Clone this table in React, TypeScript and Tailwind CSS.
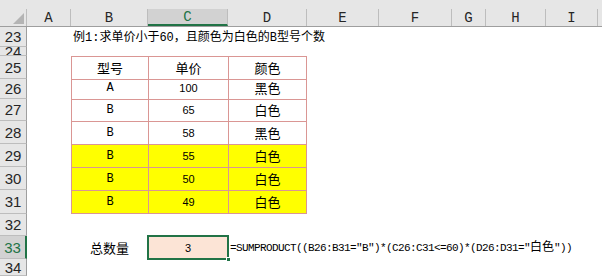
import React from "react";

type Row = {
  n: number;
  h: string;
  kind?: "title" | "head" | "data" | "total";
  cells?: [string, string, string];
  yellow?: boolean;
  last?: boolean;
};

const ROWS: Row[] = [
  { n: 23, h: "h-[20px]", kind: "title" },
  { n: 24, h: "h-[9px]" },
  { n: 25, h: "h-[23px]", kind: "head", cells: ["型号", "单价", "颜色"] },
  { n: 26, h: "h-[20px]", kind: "data", cells: ["A", "100", "黑色"] },
  { n: 27, h: "h-[22px]", kind: "data", cells: ["B", "65", "白色"] },
  { n: 28, h: "h-[23px]", kind: "data", cells: ["B", "58", "黑色"] },
  { n: 29, h: "h-[23px]", kind: "data", cells: ["B", "55", "白色"], yellow: true },
  { n: 30, h: "h-[23px]", kind: "data", cells: ["B", "50", "白色"], yellow: true },
  { n: 31, h: "h-[24px]", kind: "data", cells: ["B", "49", "白色"], yellow: true, last: true },
  { n: 32, h: "h-[22px]" },
  { n: 33, h: "h-[23px]", kind: "total" },
  { n: 34, h: "h-[17px]" },
];

const COL_HEADS = [
  { label: "A", w: "w-[44px]" },
  { label: "B", w: "w-[77px]" },
  { label: "C", w: "w-[80px]", active: true },
  { label: "D", w: "w-[79px]" },
  { label: "E", w: "w-[72px]" },
  { label: "F", w: "w-[73px]" },
  { label: "G", w: "w-[34px]" },
  { label: "H", w: "w-[60px]" },
  { label: "I", w: "w-[52px]" },
];

const CJK = "font-['Noto_Sans_CJK_SC',sans-serif]";
const MONO = "font-['Liberation_Mono','Noto_Sans_CJK_SC',monospace]";

function RowHeader({ n, h }: { n: number; h: string }) {
  const active = n === 33;
  return (
    <div
      className={`${h} w-[27px] shrink-0 overflow-hidden border-b border-[#bdbdbd] flex items-center justify-center font-['Liberation_Sans',sans-serif] text-[15px] leading-none ${
        active
          ? "bg-[#d2d2d2] text-[#217346] border-r-2 border-r-[#217346]"
          : "bg-[#e6e6e6] text-[#262626] border-r border-r-[#9e9e9e]"
      }`}
    >
      {n}
    </div>
  );
}

function TableCell({
  w,
  text,
  row,
  right,
}: {
  w: string;
  text: string;
  row: Row;
  right?: boolean;
}) {
  const isLetter = /^[A-Z]$/.test(text);
  const isNum = /^\d+$/.test(text);
  const font = isLetter
    ? "font-['Liberation_Mono',monospace] text-[12px]"
    : isNum
      ? "font-['Liberation_Sans',sans-serif] text-[11px]"
      : `${CJK} text-[13px]`;
  return (
    <div
      className={`${w} h-full shrink-0 flex items-end justify-center pb-[3px] border-t border-l border-[#da9694] ${
        right ? "border-r" : ""
      } ${row.last ? "border-b" : ""} ${row.yellow ? "bg-[#ffff00]" : "bg-white"}`}
    >
      <span className={`${font} leading-[16px] text-black`}>{text}</span>
    </div>
  );
}

export default function App() {
  return (
    <div className="w-[602px] h-[276px] overflow-hidden bg-white select-none">
      {/* column headers */}
      <div className="h-[27px] bg-[#e6e6e6] flex flex-col">
        <div className="h-[9px]" />
        <div className="h-[18px] flex border-b border-[#9e9e9e]">
          <div className="w-[27px] shrink-0 relative border-r border-[#bdbdbd]">
            <svg className="absolute right-[2px] bottom-[2px]" width="11" height="11" viewBox="0 0 11 11">
              <polygon points="11,0 11,11 0,11" fill="#b4b4b4" />
            </svg>
          </div>
          {COL_HEADS.map((c) => (
            <div
              key={c.label}
              className={`${c.w} shrink-0 flex items-center justify-center border-r border-[#bdbdbd] font-['Liberation_Mono',monospace] text-[14px] leading-none ${
                c.active
                  ? "bg-[#d2d2d2] text-[#217346] border-b-2 border-b-[#217346] pt-[1px]"
                  : "text-[#262626]"
              }`}
            >
              {c.label}
            </div>
          ))}
          <div className="flex-1" />
        </div>
      </div>

      {/* body rows */}
      {ROWS.map((row) => (
        <div key={row.n} className={`${row.h} flex`}>
          <RowHeader n={row.n} h={row.h} />
          <div className="w-[44px] shrink-0" />
          {row.kind === "title" && (
            <div className="flex-1 flex items-end pl-[2px] pb-[1px]">
              <span className={`${MONO} text-[12px] leading-[16px] text-black whitespace-nowrap`}>
                例1:求单价小于60，且颜色为白色的B型号个数
              </span>
            </div>
          )}
          {(row.kind === "head" || row.kind === "data") && row.cells && (
            <>
              <TableCell w="w-[77px]" text={row.cells[0]} row={row} />
              <TableCell w="w-[80px]" text={row.cells[1]} row={row} />
              <TableCell w="w-[79px]" text={row.cells[2]} row={row} right />
            </>
          )}
          {row.kind === "total" && (
            <>
              <div className="w-[77px] shrink-0 flex items-end justify-center pb-[3px]">
                <span className={`${CJK} text-[13px] leading-[16px] text-black`}>总数量</span>
              </div>
              <div className="w-[80px] shrink-0 relative bg-[#fce4d6] flex items-end justify-center pb-[3px]">
                <span className="font-['Liberation_Sans',sans-serif] text-[11px] leading-[16px] text-black">3</span>
                <div className="absolute -left-[1px] -top-[1px] -right-[1px] -bottom-[1px] border-2 border-[#217346]" />
                <div className="absolute -right-[3px] -bottom-[3px] w-[5px] h-[5px] bg-[#217346] border border-white" />
              </div>
              <div className="flex-1 flex items-end pl-[2px] pb-[3px]">
                <span className={`${MONO} text-[11px] tracking-[-0.6px] leading-[16px] text-black whitespace-nowrap`}>
                  =SUMPRODUCT((B26:B31="B")*(C26:C31&lt;=60)*(D26:D31="
                  <span className={`${CJK} text-[12px] tracking-normal`}>白色</span>"))
                </span>
              </div>
            </>
          )}
        </div>
      ))}
    </div>
  );
}
